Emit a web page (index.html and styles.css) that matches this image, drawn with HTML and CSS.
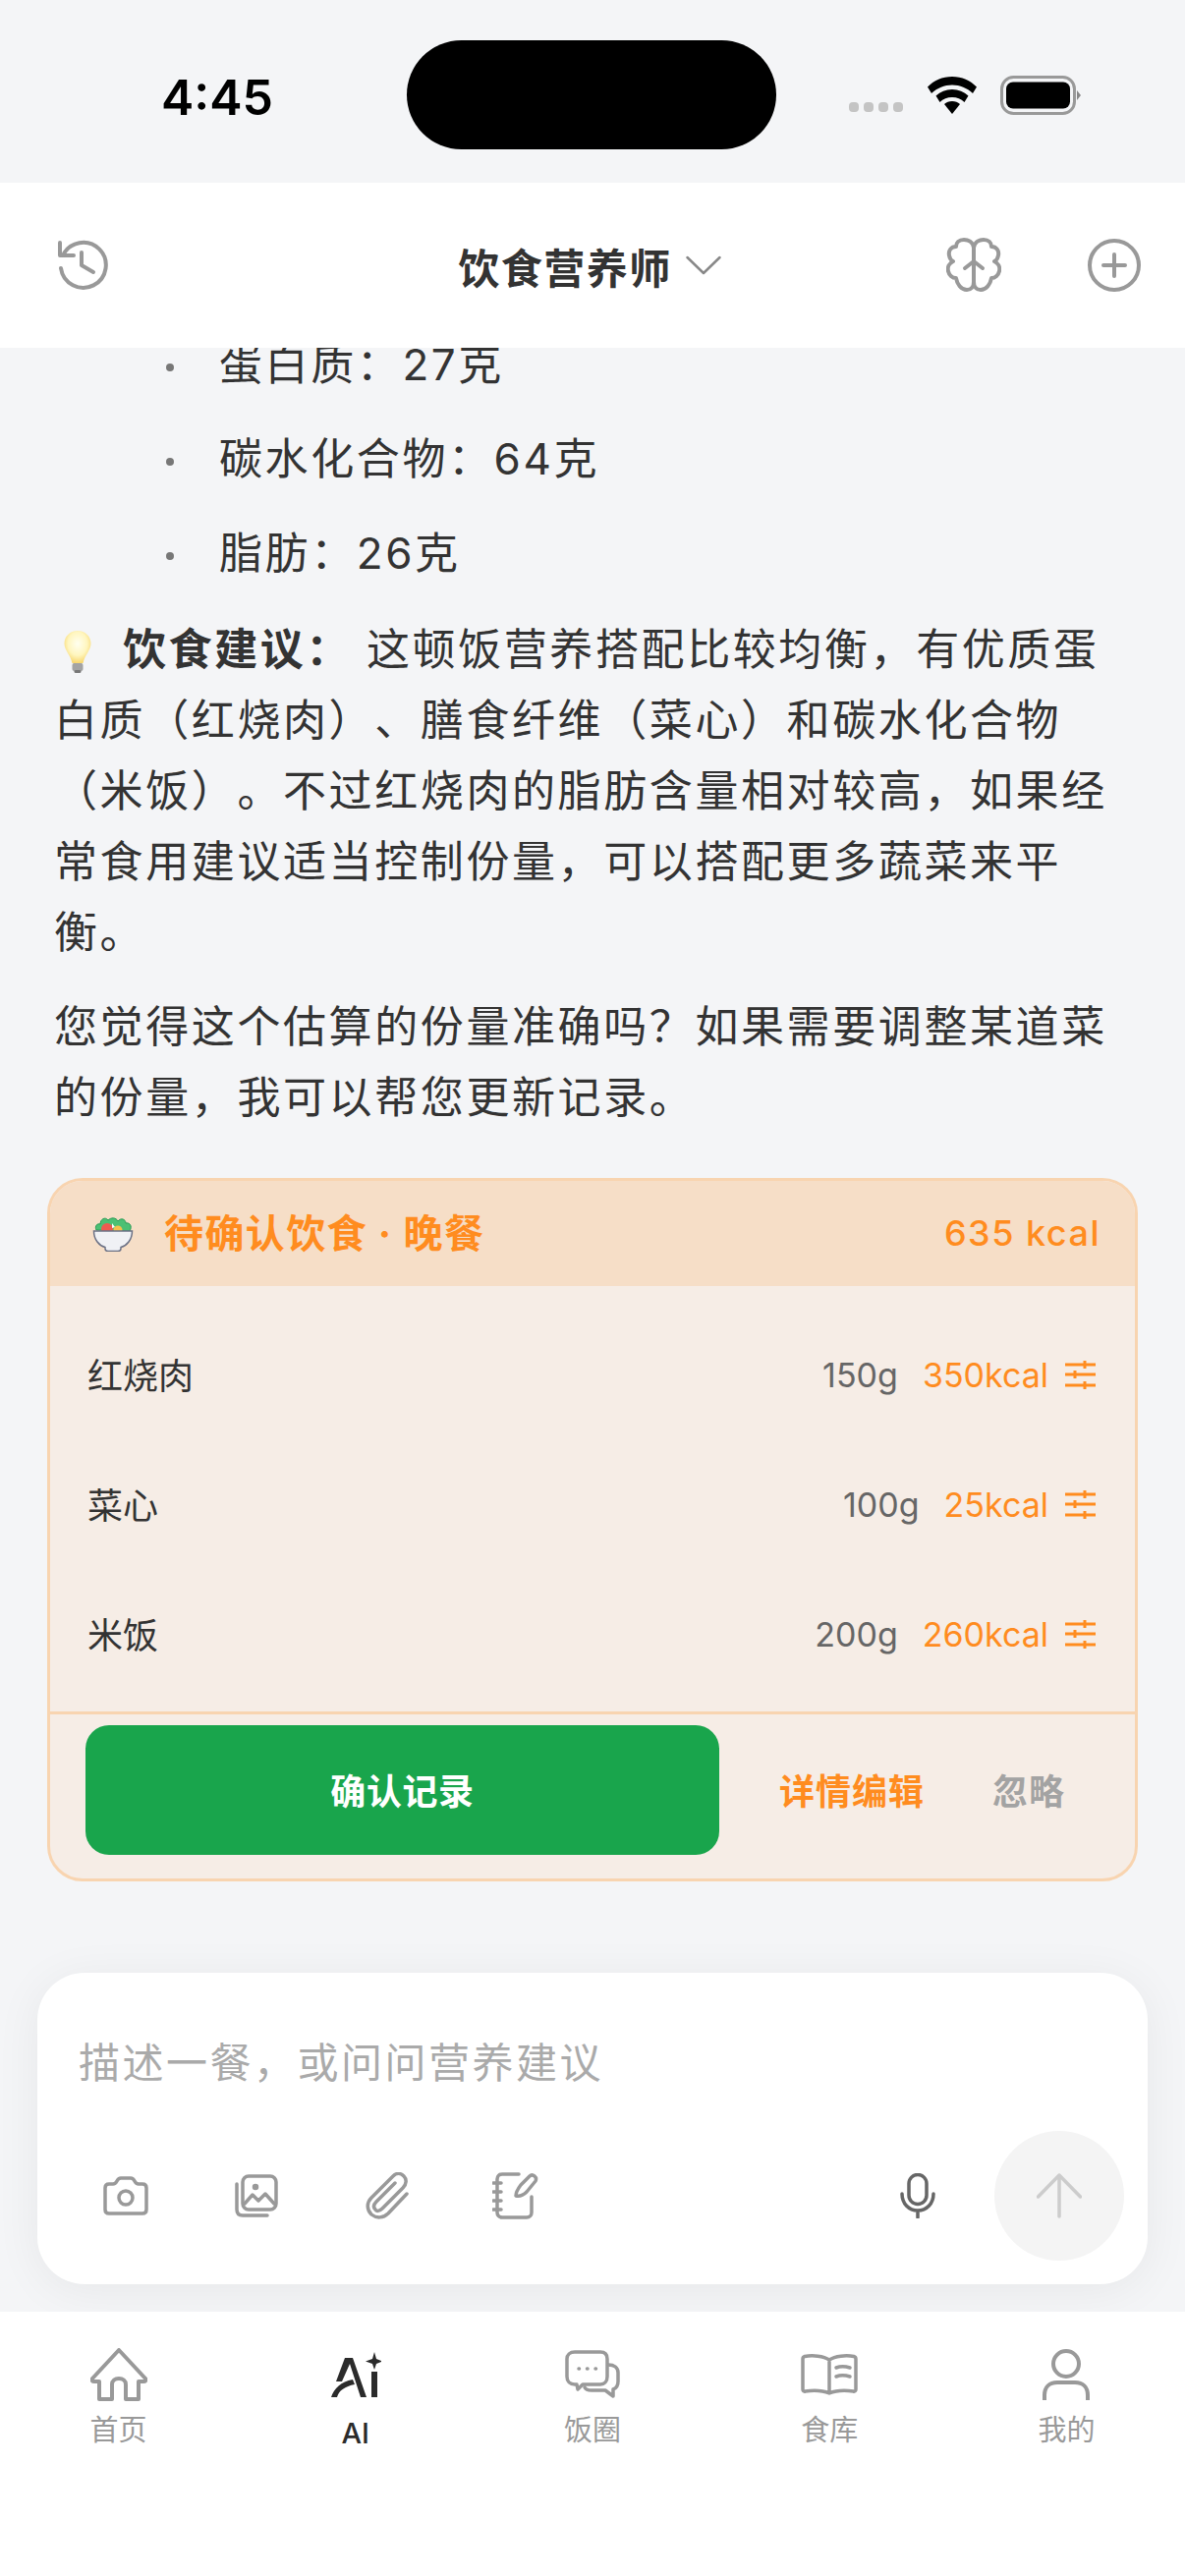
FILE: index.html
```html
<!DOCTYPE html>
<html lang="zh-CN">
<head>
    <meta charset="UTF-8">
    <meta name="viewport" content="width=device-width, initial-scale=1.0">
    <title>饮食营养师</title>
    <link rel="stylesheet" href="styles.css">
</head>
<body>
    <div class="statusbar">
        <span class="time">4:45</span>
        <div class="island"></div>
        <div class="status-icons">
            <svg class="signal" width="56" height="12" viewBox="0 0 56 12"><rect x="0" y="1" width="10" height="10" rx="4" fill="#c4c4c4"/><rect x="15" y="1" width="10" height="10" rx="4" fill="#c4c4c4"/><rect x="30" y="1" width="10" height="10" rx="4" fill="#c4c4c4"/><rect x="45" y="1" width="10" height="10" rx="4" fill="#c4c4c4"/></svg>
            <svg class="wifi" width="52" height="38" viewBox="0 0 52 38"><path d="M26 0C16 0 7.500 4 1 10.500L5 17C11 11.500 18 8.500 26 8.500S41 11.500 47 17L51 10.500C44.500 4 36 0 26 0Z" fill="#000"/><path d="M26 13C19.500 13 14 15.300 9.500 19.500L13.500 26C17 22.800 21 21 26 21S35 22.800 38.500 26L42.500 19.500C38 15.300 32.500 13 26 13Z" fill="#000"/><path d="M26 25C23 25 20 26 18 28L26 38L34 28C32 26 29 25 26 25Z" fill="#000"/></svg>
            <svg class="battery" width="82" height="40" viewBox="0 0 82 40"><rect x="1.500" y="1.500" width="74" height="37" rx="12" fill="none" stroke="#999" stroke-width="3"/><rect x="6" y="6.500" width="65" height="27" rx="7" fill="#000"/><path d="M78 15L82 20L78 25Z" fill="#888"/></svg>
        </div>
    </div>

    <header class="topbar">
        <svg class="top-icon" width="52" height="54" viewBox="0 0 52 54" fill="none" stroke="#999" stroke-width="4" stroke-linecap="round" stroke-linejoin="round"><path d="M3 4V17H17"/><path d="M6 17A23 23 0 1 1 4 30"/><path d="M25 14V27L37 34"/></svg>
        <div class="title">
            <span>饮食营养师</span>
            <svg width="36" height="20" viewBox="0 0 36 20" fill="none" stroke="#888" stroke-width="2.500" stroke-linecap="round" stroke-linejoin="round"><path d="M1.500 2L18 18L34.500 2"/></svg>
        </div>
        <div class="top-right">
            <svg class="top-icon" width="56" height="56" viewBox="0 0 56 56" fill="none" stroke="#999" stroke-width="4" stroke-linecap="round" stroke-linejoin="round"><path d="M28 10C27 4 22 2 18 2C13 2 10 5 10 9C5 9 2 13 3 18C3.500 21 5 23 7 24C3 26 1 30 2 34C3 38 6 41 10 41C11 47 15 53 21 53C25 53 28 50 28 45Z"/><path d="M28 10C29 4 34 2 38 2C43 2 46 5 46 9C51 9 54 13 53 18C52.500 21 51 23 49 24C53 26 55 30 54 34C53 38 50 41 46 41C45 47 41 53 35 53C31 53 28 50 28 45Z"/><path d="M28 24L19 31M28 24L37 31"/></svg>
            <svg class="top-icon" width="56" height="56" viewBox="0 0 56 56" fill="none" stroke="#999" stroke-width="4" stroke-linecap="round"><circle cx="28" cy="28" r="25"/><path d="M28 17V39M17 28H39"/></svg>
        </div>
    </header>

    <main class="chat">
        <ul class="macro-list">
            <li>蛋白质：27克</li>
            <li>碳水化合物：64克</li>
            <li>脂肪：26克</li>
        </ul>
        <p class="msg">
            <svg class="bulb" width="30" height="44" viewBox="0 0 30 44"><defs><radialGradient id="glow" cx="50%" cy="40%" r="60%"><stop offset="0" stop-color="#fffff0"/><stop offset="0.6" stop-color="#fff6bf"/><stop offset="1" stop-color="#f8d66d"/></radialGradient></defs><path d="M15 1C7 1 1.500 7 1.500 14C1.500 21 8 26 9.500 34H20.500C22 26 28.500 21 28.500 14C28.500 7 23 1 15 1Z" fill="url(#glow)"/><rect x="9.500" y="34" width="11" height="8" rx="2" fill="#a3a3a3"/><rect x="11.500" y="41" width="7" height="3" rx="1.500" fill="#777"/></svg>
            <strong>饮食建议：</strong> 这顿饭营养搭配比较均衡，有优质蛋白质（红烧肉）、膳食纤维（菜心）和碳水化合物（米饭）。不过红烧肉的脂肪含量相对较高，如果经常食用建议适当控制份量，可以搭配更多蔬菜来平衡。
        </p>
        <p class="msg">您觉得这个估算的份量准确吗？如果需要调整某道菜的份量，我可以帮您更新记录。</p>

        <section class="meal-card">
            <div class="meal-head">
                <div class="meal-title">
                    <svg width="42" height="36" viewBox="0 0 42 36"><path d="M4 14C2 10 5 7 8 8C8 3 13 0 16 4C19 1 24 1 26 5C29 1 34 3 34 7C38 6 41 10 38 15Z" fill="#4cc073" stroke="#2a9a56" stroke-width="1"/><circle cx="15" cy="13" r="6" fill="#ef5b50"/><circle cx="26" cy="14" r="4.500" fill="#f8c04c"/><path d="M20 7L23 11L20 12Z" fill="#fff"/><path d="M1.500 15H40.500C40.500 24 35 30 29 31.500V33C29 34.500 28 35.500 26 35.500H16C14 35.500 13 34.500 13 33V31.500C7 30 1.500 24 1.500 15Z" fill="#f0f1f5" stroke="#6b7185" stroke-width="1.500"/></svg>
                    <span>待确认饮食 · 晚餐</span>
                </div>
                <span class="meal-total">635 kcal</span>
            </div>
            <div class="meal-rows">
                <div class="meal-row">
                    <span class="food">红烧肉</span>
                    <span class="grams">150g</span>
                    <span class="kcal">350kcal</span>
                    <svg class="tune" width="32" height="30" viewBox="0 0 32 30" fill="none" stroke="#ff8c1f" stroke-width="3"><path d="M1 5H32M1 15H32M1 26H32M21 1V9M11 11V19M21 22V30"/></svg>
                </div>
                <div class="meal-row">
                    <span class="food">菜心</span>
                    <span class="grams">100g</span>
                    <span class="kcal">25kcal</span>
                    <svg class="tune" width="32" height="30" viewBox="0 0 32 30" fill="none" stroke="#ff8c1f" stroke-width="3"><path d="M1 5H32M1 15H32M1 26H32M21 1V9M11 11V19M21 22V30"/></svg>
                </div>
                <div class="meal-row">
                    <span class="food">米饭</span>
                    <span class="grams">200g</span>
                    <span class="kcal">260kcal</span>
                    <svg class="tune" width="32" height="30" viewBox="0 0 32 30" fill="none" stroke="#ff8c1f" stroke-width="3"><path d="M1 5H32M1 15H32M1 26H32M21 1V9M11 11V19M21 22V30"/></svg>
                </div>
            </div>
            <div class="meal-actions">
                <button class="confirm">确认记录</button>
                <span class="edit">详情编辑</span>
                <span class="ignore">忽略</span>
            </div>
        </section>
    </main>

    <section class="composer">
        <div class="placeholder">描述一餐，或问问营养建议</div>
        <div class="tools">
            <svg class="tool-camera" width="46" height="40" viewBox="0 0 46 40" fill="none" stroke="#999" stroke-width="3.500" stroke-linejoin="round"><path d="M2 12C2 9.500 3.500 8 6 8H10C12 8 13 7 14 5C15 3 16 2 18 2H28C30 2 31 3 32 5C33 7 34 8 36 8H40C42.500 8 44 9.500 44 12V34C44 36.500 42.500 38 40 38H6C3.500 38 2 36.500 2 34Z"/><circle cx="23" cy="22" r="7"/></svg>
            <svg class="tool-image" width="44" height="44" viewBox="0 0 44 44" fill="none" stroke="#999" stroke-width="3.500" stroke-linecap="round" stroke-linejoin="round"><rect x="8" y="2" width="34" height="34" rx="6"/><path d="M2 10V36C2 40 4 42 8 42H33"/><path d="M10 30L18 21L24 27L31 20L40 30"/><circle cx="21" cy="13" r="1.500" fill="#999"/></svg>
            <svg class="tool-clip" width="46" height="48" viewBox="0 0 46 48" fill="none" stroke="#999" stroke-width="3.500" stroke-linecap="round" stroke-linejoin="round"><path d="M43 22L24 42C19 47 12 47 7 43C2 38 2 31 7 26L29 4C33 0 37 1 40 4C43 7 43 12 39 16L18 37C15 40 12 40 11 38C9 36 9 33 12 30L31 11"/></svg>
            <svg class="tool-note" width="48" height="48" viewBox="0 0 48 48" fill="none" stroke="#999" stroke-width="3.500" stroke-linecap="round" stroke-linejoin="round"><path d="M27 2H10C7 2 5 4 5 7V41C5 44 7 46 10 46H35C38 46 40 44 40 41V25"/><path d="M1 11H9M1 20H9M1 29H9M1 38H9"/><path d="M24 24C24 20 26 17 29 13L38 4C41 1 46 5 44 9L35 20C32 23 28 25 24 24Z"/></svg>
            <svg class="tool-mic" width="36" height="46" viewBox="0 0 36 46" fill="none" stroke="#666" stroke-width="3.500" stroke-linecap="round"><rect x="9" y="1.500" width="18" height="30" rx="9"/><path d="M2 21C2 31 9 38 18 38S34 31 34 21M18 38V45"/></svg>
            <div class="send">
                <svg width="46" height="46" viewBox="0 0 46 46" fill="none" stroke="#ccc" stroke-width="3.500" stroke-linecap="round" stroke-linejoin="round"><path d="M1.500 24L23 2L44.500 24M23 2V44"/></svg>
            </div>
        </div>
    </section>

    <nav class="tabbar">
        <div class="tab">
            <svg class="icon-home" width="58" height="54" viewBox="0 0 58 54" fill="none" stroke="#999" stroke-width="4" stroke-linejoin="round"><path d="M29 2L2 31C1 33 2 34 4 34H9V52H22V37C22 33 25 31 29 31S36 33 36 37V52H49V34H54C56 34 57 33 56 31Z"/></svg>
            <span>首页</span>
        </div>
        <div class="tab active">
            <svg class="icon-ai" width="52" height="46" viewBox="0 0 52 46"><path d="M15 6H23L37 46H31L20 12L12 30H6Z" fill="#2b2b2b"/><path d="M1 46C4 37 11 30 23 28L25 33C15 35 9 39 7 46Z" fill="#2b2b2b"/><rect x="42" y="20" width="6" height="26" fill="#2b2b2b"/><path d="M45 0L47 7L53 9.500L47 12L45 18L43 12L36 9.500L43 7Z" fill="#2b2b2b"/></svg>
            <span>AI</span>
        </div>
        <div class="tab">
            <svg class="icon-chat" width="56" height="50" viewBox="0 0 56 50" fill="none" stroke="#999" stroke-width="3.500" stroke-linecap="round" stroke-linejoin="round"><path d="M10 2H36C41 2 43 5 43 9V27C43 32 40 35 36 35H18L13 40L12 35H10C5 35 2 32 2 27V9C2 5 5 2 10 2Z"/><path d="M44 15C50 15 54 18 54 23V32C54 36 52 39 49 40V47L41 41H27C24 41 21 40 20 38"/><path d="M14 19H14.500M22.500 19H23M31 19H31.500"/></svg>
            <span>饭圈</span>
        </div>
        <div class="tab">
            <svg class="icon-book" width="58" height="42" viewBox="0 0 58 42" fill="none" stroke="#999" stroke-width="3.500" stroke-linecap="round" stroke-linejoin="round"><path d="M29 6C23 2 12 1 4 2.500C2.500 3 2 4 2 5V36C2 37.500 3 38.500 4.500 38C12 37 22 37 29 40C36 37 46 37 53.500 38C55 38.500 56 37.500 56 36V5C56 4 55.500 3 54 2.500C46 1 35 2 29 6ZM29 6V40"/><path d="M36 14C40 12.500 45 12.500 50 14M36 23C40 21.500 45 21.500 50 23"/></svg>
            <span>食库</span>
        </div>
        <div class="tab">
            <svg class="icon-user" width="48" height="54" viewBox="0 0 48 54" fill="none" stroke="#999" stroke-width="4"><circle cx="24" cy="15" r="13"/><path d="M2 52V47C2 39 7 34 15 34H33C41 34 46 39 46 47V52"/></svg>
            <span>我的</span>
        </div>
    </nav>
</body>
</html>
```

FILE: styles.css
```css
* {
    box-sizing: border-box;
}
body {
    margin: 0;
    width: 1206px;
    height: 2622px;
    overflow: hidden;
    display: flex;
    flex-direction: column;
    background-color: #f4f5f7;
    color: #333;
    font-family: Inter, 'Noto Sans CJK SC', sans-serif;
    text-spacing-trim: space-all;
}
svg {
    display: block;
    flex-shrink: 0;
}

.statusbar {
    height: 186px;
    flex-shrink: 0;
    display: flex;
    align-items: center;
    padding: 0 106px 0 164px;
}
.time {
    width: 250px;
    margin-top: 11px;
    font-size: 50px;
    font-weight: 600;
    color: #000;
}
.island {
    width: 376px;
    height: 111px;
    margin-top: 7px;
    border-radius: 56px;
    background: #000;
}
.status-icons {
    margin-left: auto;
    margin-top: 8px;
    display: flex;
    align-items: center;
    gap: 23px;
}
.signal {
    margin-top: 24px;
}

.topbar {
    height: 168px;
    flex-shrink: 0;
    display: flex;
    align-items: center;
    justify-content: space-between;
    padding: 0 44px 0 58px;
    background: #fff;
    position: relative;
    z-index: 1;
}
.title {
    display: flex;
    align-items: center;
    gap: 14px;
    margin-left: 127px;
    font-size: 42px;
    font-weight: 700;
    letter-spacing: 1.500px;
}
.top-right {
    display: flex;
    gap: 87px;
}

.chat {
    flex: 1;
    min-height: 0;
    overflow: hidden;
    padding: 0 48px;
    font-size: 44px;
    letter-spacing: 2.600px;
}
.macro-list {
    margin: -31px 0 14px;
    padding: 0 0 0 124px;
    list-style: none;
}
.macro-list li {
    height: 96px;
    line-height: 96px;
    margin-left: 51px;
    position: relative;
}
.macro-list li::before {
    content: "";
    position: absolute;
    left: -54px;
    top: 47px;
    width: 8px;
    height: 8px;
    border-radius: 50%;
    background: #777;
}
.msg {
    margin: 0 0 24px;
    padding: 0 14px 0 7px;
    line-height: 72px;
}
.msg strong {
    font-weight: 700;
}
.bulb {
    display: inline-block;
    vertical-align: -8px;
    margin: 0 16px 0 9px;
}

.meal-card {
    margin-top: 46px;
    height: 716px;
    border: 3px solid #f8d4b0;
    border-radius: 36px;
    overflow: hidden;
    background: #f6ede6;
}
.meal-head {
    height: 107px;
    display: flex;
    align-items: center;
    justify-content: space-between;
    padding: 0 35px 0 43px;
    background: #f6dec7;
    color: #ff8c1f;
}
.meal-title {
    display: flex;
    align-items: center;
    gap: 31px;
    font-size: 40px;
    font-weight: 700;
    letter-spacing: 1.400px;
}
.meal-title span {
    margin-bottom: 6px;
}
.meal-total {
    margin-bottom: 2px;
    font-size: 36px;
    font-weight: 500;
    letter-spacing: 1.500px;
}
.meal-rows {
    padding: 24px 0 13px;
    border-bottom: 3px solid #f8d4b0;
}
.meal-row {
    height: 132px;
    display: flex;
    align-items: center;
    padding: 0 40px 0 38px;
    font-size: 34px;
    letter-spacing: 0;
}
.food {
    flex: 1;
    margin-bottom: 3px;
    font-size: 36px;
}
.grams {
    color: #666;
    margin-right: 25px;
}
.kcal {
    color: #ff8c1f;
    margin-right: 16px;
}
.meal-actions {
    display: flex;
    align-items: center;
    padding: 11px 0 0 36px;
}
.confirm {
    width: 645px;
    height: 132px;
    padding: 0 0 3px;
    border: none;
    border-radius: 24px;
    background: #19a54c;
    color: #fff;
    font-family: inherit;
    font-size: 36px;
    font-weight: 700;
    letter-spacing: 0.600px;
}
.edit,
.ignore {
    margin-bottom: 3px;
    font-size: 36px;
    font-weight: 700;
    letter-spacing: 1px;
}
.edit {
    margin-left: 61px;
    color: #ff8c1f;
}
.ignore {
    margin-left: 69px;
    color: #a3a3a3;
}

.composer {
    height: 317px;
    flex-shrink: 0;
    margin: 0 38px 28px;
    border-radius: 48px;
    background: #fff;
    box-shadow: 0 6px 48px rgba(0, 0, 0, 0.06);
    padding: 60px 24px 0 42px;
    position: relative;
}
.placeholder {
    margin-top: 2px;
    font-size: 42px;
    line-height: 60px;
    letter-spacing: 2.500px;
    color: #aaa;
}
.tools {
    margin-top: 39px;
    display: flex;
    align-items: center;
}
.tool-camera {
    margin-left: 25px;
}
.tool-image {
    margin-left: 88px;
}
.tool-clip {
    margin-left: 88px;
}
.tool-note {
    margin-left: 84px;
}
.tool-mic {
    margin-left: 367px;
}
.send {
    width: 132px;
    height: 132px;
    flex-shrink: 0;
    margin-left: 60px;
    border-radius: 50%;
    background: #f4f4f4;
    display: flex;
    align-items: center;
    justify-content: center;
}

.tabbar {
    height: 269px;
    flex-shrink: 0;
    display: grid;
    grid-template-columns: repeat(5, 1fr);
    padding-top: 36px;
    background: #fff;
    position: relative;
}
.tab {
    display: flex;
    flex-direction: column;
    align-items: center;
    height: 102px;
    justify-content: space-between;
    font-size: 29px;
    line-height: 34px;
    color: #999;
}
.tab.active {
    height: 105px;
    color: #2b2b2b;
    font-weight: 500;
}
.icon-home {
    margin-top: 1px;
}
.icon-ai {
    margin-top: 5px;
}
.icon-chat {
    margin-top: 3px;
}
.icon-book {
    margin-top: 7px;
}
.icon-user {
    margin-top: 2px;
}
```
